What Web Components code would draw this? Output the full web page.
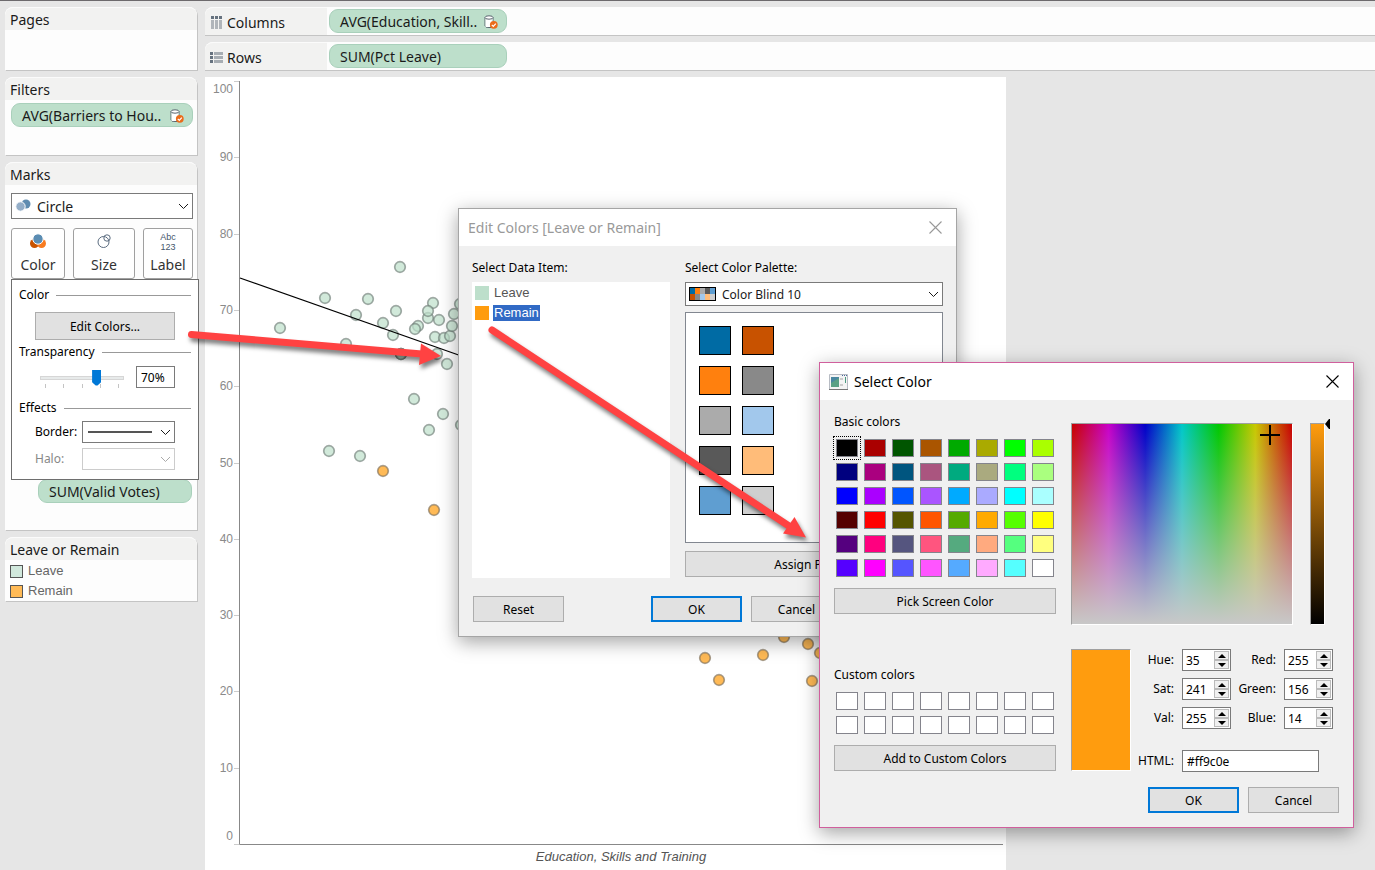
<!DOCTYPE html>
<html lang="en">
<head>
<meta charset="utf-8">
<title>Leave or Remain</title>
<style>
  html, body { margin: 0; height: 100%; }
  body { font: 14px/20px "Noto Sans", "Open Sans", sans-serif; color: #1a1a1a; background: #e6e6e6; overflow: hidden; }
</style>
</head>
<body>
<viz-workbook></viz-workbook>

<script>
const BASE = '*,*::before,*::after{box-sizing:border-box}button,input,select{font:inherit;color:inherit;margin:0}';

function define(name, css, html, setup) {
  const tpl = document.createElement('template');
  tpl.innerHTML = `<style>${BASE}${css}</style>${html}`;
  customElements.define(name, class extends HTMLElement {
    constructor() {
      super();
      this.attachShadow({ mode: 'open' }).append(tpl.content.cloneNode(true));
    }
    connectedCallback() {
      if (setup && !this.ready) { this.ready = true; setup(this, this.shadowRoot); }
    }
  });
}

const CHEVRON = '<svg class="chev" width="11" height="7" viewBox="0 0 11 7"><path d="M1 1l4.500 4.500L10 1" fill="none" stroke="currentColor"/></svg>';

/* ---------- shelf pieces ---------- */

define('viz-card', `
  :host{display:flex;flex-direction:column;background:#fdfdfd;border-radius:8px 8px 0 0;box-shadow:1px 1px 0 #c4c4c4;position:relative}
  h2{margin:0;height:23px;padding:2px 5px;font-size:14px;font-weight:400;line-height:20px;background:#f2f2f1;border-top:1px solid #fbfbfb;border-radius:8px 8px 0 0}
`, '<h2></h2><slot></slot>', (el, r) => { r.querySelector('h2').textContent = el.getAttribute('heading'); });

define('viz-pill', `
  :host{display:flex;align-items:center;gap:5px;height:24px;padding:1px 8px 0 10px;border:1px solid #a9d0bb;border-radius:9px;background:#bddfcb;line-height:22px;white-space:nowrap}
  span{flex:1}
  svg{display:none}
  :host([source]) svg{display:block}
`, `<span><slot></slot></span>
  <svg width="14" height="14" viewBox="0 0 14 14"><path d="M1 2.500v8.500q0 1.500 4 1.500h2M9 2.500V6" fill="none" stroke="#5b6670"/><path d="M1.500 3.500h7V6L6 9v3H1.500z" fill="#fff"/><ellipse cx="5" cy="2.500" rx="4" ry="1.700" fill="#fff" stroke="#5b6670"/><circle cx="9.800" cy="9.800" r="3.900" fill="#eb6b1a"/><path d="M7.800 9.800l1.500 1.500 2.500-2.700" fill="none" stroke="#fff" stroke-width="1.200"/></svg>`);

define('viz-shelf', `
  :host{display:grid;grid-template-columns:122px 1fr;height:28px;background:#fdfdfd;border-radius:8px 0 0 0;box-shadow:0 1px 0 #c4c4c4}
  .name{display:flex;align-items:center;gap:4px;padding:2px 0 0 5px;background:#f2f2f1;border-radius:8px 0 0 0;border-top:1px solid #fbfbfb}
  .drop{display:grid;grid-template-columns:178px;align-content:center;padding-left:2px}
`, '<div class="name"><slot name="icon"></slot><span></span></div><div class="drop"><slot></slot></div>',
(el, r) => { r.querySelector('.name span').textContent = el.getAttribute('name'); });

define('viz-mark-button', `
  :host{display:block}
  button{display:grid;justify-items:center;align-content:space-between;width:100%;height:51px;padding:4px 0 3px;border:1px solid #a0a0a0;border-radius:3px;background:#fff;color:#333;line-height:20px}
`, '<button type="button"><slot name="icon"></slot><slot></slot></button>');

/* ---------- form controls ---------- */

define('ui-button', `
  :host{display:block}
  button{display:block;width:100%;height:26px;padding:1px 0 0;border:1px solid #adadad;background:#e1e1e1;color:#000;font-size:12px;line-height:23px}
  :host([tall]) button{height:28px;line-height:26px}
  :host([primary]) button{border:2px solid #0078d7;line-height:21px}
`, '<button type="button"><slot></slot></button>');

define('ui-select', `
  :host{display:grid;align-items:center;color:#1a1a1a}
  :host([disabled]){color:#aaa}
  label{font-size:12px;color:#000}
  :host([disabled]) label{color:#888}
  :host([inline]){grid-template-columns:47px 1fr}
  .box{position:relative;display:grid}
  select{appearance:none;width:100%;height:var(--h,22px);padding:1px 20px 0 var(--indent,4px);border:1px solid #7a7a7a;border-radius:0;background:#fff;opacity:1}
  :host([disabled]) select{border-color:#ccc}
  ::slotted(svg){position:absolute;left:4px;top:0;bottom:0;margin:auto 0}
  .chev{position:absolute;right:4px;top:0;bottom:0;margin:auto 0;pointer-events:none}
`, `<label for="s"></label><div class="box"><select id="s"><option></option></select><slot></slot>${CHEVRON}</div>`,
(el, r) => {
  const label = r.querySelector('label');
  if (el.hasAttribute('label')) label.textContent = el.getAttribute('label'); else label.remove();
  const s = r.querySelector('select');
  s.options[0].textContent = el.getAttribute('value') || '';
  s.disabled = el.hasAttribute('disabled');
  if (el.hasAttribute('small')) s.style.fontSize = '12px';
});

define('ui-group', `
  :host{display:grid;gap:0}
  h3{display:flex;align-items:center;gap:7px;margin:0;font-size:12px;font-weight:400;line-height:16px;color:#000}
  h3::after{content:"";flex:1;height:1px;background:#999}
`, '<h3></h3><slot></slot>', (el, r) => { r.querySelector('h3').textContent = el.getAttribute('heading'); });

define('ui-opacity', `
  :host{display:grid;grid-template-columns:84px 39px;column-gap:12px;align-items:center}
  .slide{display:grid}
  input[type=range]{appearance:none;width:84px;height:18px;margin-top:2px;background:none}
  input[type=range]::-webkit-slider-runnable-track{height:4px;background:#e7eaea;border:1px solid #d6d6d6}
  input[type=range]::-webkit-slider-thumb{appearance:none;width:9px;height:16px;margin-top:-7px;background:#0078d7;clip-path:polygon(0 0,100% 0,100% 80%,60% 100%,40% 100%,0 80%)}
  .ticks{display:flex;justify-content:space-between;padding:0 5px;margin-top:-3px}
  .ticks i{width:1px;height:4px;background:#c4c4c4}
  input[type=text]{width:39px;height:22px;padding:1px 4px 0;border:1px solid #7a7a7a;background:#fff;font-size:12px;color:#000}
`, `<div class="slide"><input type="range" min="0" max="100" value="70" aria-label="Transparency"><div class="ticks"><i></i><i></i><i></i><i></i><i></i></div></div>
  <input type="text" value="70%" aria-label="Transparency value">`,
(el, r) => {
  const [range, text] = r.querySelectorAll('input');
  range.addEventListener('input', () => { text.value = range.value + '%'; });
});

define('ui-spin', `
  :host{display:grid;grid-template-columns:1fr 49px;column-gap:8px;align-items:center}
  label{text-align:right;font-size:12px;line-height:16px}
  .box{display:grid;grid-template-columns:1fr 15px;height:22px;padding:1px;border:1px solid #7a7a7a;background:#fff}
  input{appearance:textfield;min-width:0;padding:1px 0 0 2px;border:0;background:none;font-size:12px}
  input::-webkit-inner-spin-button{appearance:none;display:none}
  .steps{display:grid;grid-template-rows:9px 9px}
  button{display:grid;place-items:center;padding:0;border:1px solid #bbb;background:#f0f0f0}
`, `<label for="n"></label><div class="box"><input id="n" type="number"><div class="steps">
  <button type="button" aria-label="Up"><svg width="8" height="4"><path d="M0 4L4 0l4 4z"/></svg></button>
  <button type="button" aria-label="Down"><svg width="8" height="4"><path d="M0 0l4 4 4-4z"/></svg></button></div></div>`,
(el, r) => {
  const n = r.querySelector('input'), [up, down] = r.querySelectorAll('button');
  r.querySelector('label').textContent = el.getAttribute('label');
  n.value = el.getAttribute('value');
  up.onclick = () => n.stepUp();
  down.onclick = () => n.stepDown();
});

define('ui-text', `
  :host{display:grid;grid-template-columns:41px 137px;column-gap:8px;align-items:center}
  label{text-align:right;font-size:12px;line-height:16px}
  input{width:100%;height:22px;padding:0 4px;border:1px solid #7a7a7a;background:#fff;font-size:12px}
`, '<label for="t"></label><input id="t" type="text">', (el, r) => {
  r.querySelector('label').textContent = el.getAttribute('label');
  r.querySelector('input').value = el.getAttribute('value');
});

define('ui-swatches', `
  :host{display:grid;justify-content:start;grid-template-columns:repeat(var(--cols,8),var(--w,22px));grid-auto-rows:var(--rh,18px);gap:var(--gy,6px) var(--gx,6px)}
  button{padding:0;border:1px solid var(--edge,#84848c)}
  button.on{outline:1px dotted #000;outline-offset:2px}
`, '', (el, r) => {
  el.getAttribute('colors').split(' ').forEach((c, i) => {
    const b = document.createElement('button');
    b.type = 'button';
    b.style.background = '#' + c;
    b.setAttribute('aria-label', '#' + c);
    if (!i && el.hasAttribute('selected')) b.className = 'on';
    r.append(b);
  });
});

/* ---------- windows ---------- */

define('ui-dialog', `
  :host{display:flex;flex-direction:column;position:absolute;border:1px solid var(--frame,#a5a5a5);background:#f0f0f0;color:#000;box-shadow:0 5px 18px rgba(0,0,0,.36);font-size:12px;line-height:16px}
  header{display:flex;align-items:center;height:37px;padding:0 14px 0 9px;background:#fff;color:var(--title,#000);font-size:14px;line-height:20px}
  h2{flex:1;margin:0;font-size:14px;font-weight:400}
  ::slotted([slot=icon]){margin-right:6px}
  header button{display:grid;padding:0;border:0;background:none}
`, `<header><slot name="icon"></slot><h2></h2><button type="button" aria-label="Close"><svg width="13" height="13" viewBox="0 0 13 13"><path d="M.5.5l12 12M12.500.5l-12 12" stroke="currentColor" stroke-width="1.100"/></svg></button></header><slot></slot>`,
(el, r) => {
  r.querySelector('h2').textContent = el.getAttribute('heading');
  r.querySelector('button').onclick = () => el.remove();
});

define('edit-colors', `
  :host{display:grid;grid-template-columns:198px 258px;column-gap:15px;padding:14px 13px}
  .col{display:grid;align-content:start}
  .cap{line-height:16px;margin-bottom:6px}
  ul{list-style:none;margin:0;padding:1px 3px;height:296px;background:#fff;font:13px/16px "Liberation Sans",Arial,sans-serif;color:#555}
  li{display:flex;align-items:center;gap:4px;height:20px}
  li i{width:14px;height:14px}
  li span{padding:0 1px}
  li.on span{background:#316ac5;color:#fff}
  ui-select{--h:24px;--indent:36px}
  .pal{height:231px;margin:6px 0 8px;padding:13px;border:1px solid #828790;background:#fff}
  .pal ui-swatches{--cols:2;--w:32px;--rh:29px;--gy:11px;--gx:11px;--edge:#000}
  .foot{grid-column:1/-1;display:grid;grid-template-columns:91px 69px 91px 91px;column-gap:9px;padding:18px 0 0 1px}
`, `
  <div class="col"><div class="cap">Select Data Item:</div>
    <ul><li><i style="background:#bddfcb"></i><span>Leave</span></li><li class="on"><i style="background:#ff9c0e"></i><span>Remain</span></li></ul></div>
  <div class="col"><div class="cap">Select Color Palette:</div>
    <ui-select small value="Color Blind 10"><svg width="27" height="14"><g shape-rendering="crispEdges"></g><rect x=".5" y=".5" width="26" height="13" fill="none" stroke="#000"/></svg></ui-select>
    <div class="pal"><ui-swatches colors="006ba4 c85200 ff800e 898989 ababab a2c8ec 595959 ffbc79 5f9ed1 cfcfcf"></ui-swatches></div>
    <ui-button>Assign Palette</ui-button></div>
  <div class="foot"><ui-button>Reset</ui-button><span></span><ui-button primary>OK</ui-button><ui-button>Cancel</ui-button></div>
`, (el, r) => {
  const cs = ['006ba4', 'ff800e', 'ababab', '595959', '5f9ed1', 'c85200', '898989', 'a2c8ec', 'ffbc79', 'cfcfcf'];
  r.querySelector('g').innerHTML = cs.map((c, i) =>
    `<rect x="${1 + (i % 5) * 5}" y="${i < 5 ? 1 : 7}" width="5" height="6" fill="#${c}"/>`).join('');
});

define('color-field', `
  :host{display:grid;grid-template-columns:222px 17px 15px 8px;height:202px}
  .hue{position:relative;width:222px;border:1px solid #a0a0a0;border-right-color:#fff;border-bottom-color:#fff;background:linear-gradient(rgba(200,200,200,0),#c8c8c8),linear-gradient(90deg,#c80000,#c800c8,#0000c8,#00c8c8,#00c800,#c8c800,#c80000)}
  .hue svg{position:absolute;left:188px;top:1px}
  .val{border:1px solid #a0a0a0;border-right-color:#fff;border-bottom-color:#fff;background:linear-gradient(#ff9c0e,#000)}
  .at{margin-top:-4px}
`, `<div class="hue"><svg width="20" height="20"><path d="M0 10h20M10 0v20" stroke="#000" stroke-width="2"/></svg></div><span></span><div class="val"></div><svg class="at" width="6" height="10"><path d="M0 5l4-5h1v10H4z"/></svg>`);

define('select-color', `
  :host{display:grid;grid-template-columns:222px 268px;column-gap:15px;padding:14px 14px}
  .cap{line-height:16px}
  .left{display:grid;align-content:start}
  .left ui-swatches{margin:9px 2px 11px}
  .left .second{margin-top:53px}
  .right{display:grid;align-content:start;padding-top:9px;row-gap:24px}
  .values{display:grid;grid-template-columns:60px 100px 102px;grid-template-rows:87px 36px}
  .now{grid-row:1/3;width:60px;height:122px;border:1px solid #a0a0a0;border-right-color:#fff;border-bottom-color:#fff;background:#ff9c0e}
  .spins{display:grid;align-content:start;row-gap:7px}
  .html{grid-column:2/-1;margin-top:14px;padding-left:2px}
  .buttons{display:grid;grid-template-columns:91px 91px;gap:9px;padding-left:77px;margin-top:-9px}
`, `
  <div class="left"><div class="cap">Basic colors</div>
    <ui-swatches selected colors="000000 aa0000 005500 aa5500 00aa00 aaaa00 00ff00 aaff00 00007f aa007f 00557f aa557f 00aa7f aaaa7f 00ff7f aaff7f 0000ff aa00ff 0055ff aa55ff 00aaff aaaaff 00ffff aaffff 550000 ff0000 555500 ff5500 55aa00 ffaa00 55ff00 ffff00 55007f ff007f 55557f ff557f 55aa7f ffaa7f 55ff7f ffff7f 5500ff ff00ff 5555ff ff55ff 55aaff ffaaff 55ffff ffffff"></ui-swatches>
    <ui-button>Pick Screen Color</ui-button>
    <div class="cap second">Custom colors</div>
    <ui-swatches colors="fff fff fff fff fff fff fff fff fff fff fff fff fff fff fff fff"></ui-swatches>
    <ui-button>Add to Custom Colors</ui-button></div>
  <div class="right"><color-field></color-field>
    <div class="values"><div class="now"></div>
      <div class="spins"><ui-spin label="Hue:" value="35"></ui-spin><ui-spin label="Sat:" value="241"></ui-spin><ui-spin label="Val:" value="255"></ui-spin></div>
      <div class="spins"><ui-spin label="Red:" value="255"></ui-spin><ui-spin label="Green:" value="156"></ui-spin><ui-spin label="Blue:" value="14"></ui-spin></div>
      <ui-text class="html" label="HTML:" value="#ff9c0e"></ui-text></div>
    <div class="buttons"><ui-button primary>OK</ui-button><ui-button>Cancel</ui-button></div></div>
`);

/* ---------- marks card and its pop-up ---------- */

define('color-popup', `
  :host{display:grid;align-content:start;height:201px;padding:7px 7px 0;border:1px solid #6e6e6e;background:#fff}
  .edit{margin:9px 16px 4px}
  ui-opacity{margin:6px 0 12px 21px}
  ui-select{margin:5px 16px 0}
`, `
  <ui-group heading="Color"><ui-button tall class="edit">Edit Colors...</ui-button></ui-group>
  <ui-group heading="Transparency"><ui-opacity></ui-opacity></ui-group>
  <ui-group heading="Effects">
    <ui-select inline label="Border:"><svg width="66" height="2" style="pointer-events:none"><path d="M2 1h64" stroke="#555" stroke-width="2"/></svg></ui-select>
    <ui-select inline disabled label="Halo:"></ui-select></ui-group>
`);

define('marks-panel', `
  :host{display:block;position:relative;padding:8px 4px 0 6px;height:345px}
  ui-select{--h:26px;--indent:25px}
  .row{display:grid;grid-template-columns:54px 62px 50px;column-gap:8px;margin-top:9px}
  color-popup{position:absolute;left:6px;top:94px;width:188px;z-index:2}
  viz-pill{margin:200px 1px 0 27px}
`, `
  <ui-select value="Circle"><svg width="18" height="14" viewBox="0 0 18 14"><circle cx="11" cy="5" r="4.500" fill="#5f8cb0"/><circle cx="5.500" cy="7.500" r="4.700" fill="#94aec8" stroke="#fff"/></svg></ui-select>
  <div class="row">
    <viz-mark-button><svg slot="icon" width="18" height="17" viewBox="0 0 18 17"><circle cx="5.500" cy="10.500" r="4.500" fill="#c85200"/><circle cx="12.500" cy="10.500" r="4.500" fill="#f77b20"/><circle cx="9" cy="6" r="5.200" fill="#5b8db3" stroke="#fff"/></svg>Color</viz-mark-button>
    <viz-mark-button><svg slot="icon" width="18" height="17" viewBox="0 0 18 17" fill="none" stroke="#5b6c80"><circle cx="8.500" cy="9" r="5.500"/><circle cx="12" cy="5" r="3.200"/></svg>Size</viz-mark-button>
    <viz-mark-button><svg slot="icon" width="20" height="20" viewBox="0 0 20 20" style="overflow:visible"><g font-family="Liberation Sans, sans-serif" font-size="9" fill="#44566c" text-anchor="middle"><text x="10" y="7">Abc</text><text x="10" y="17">123</text></g></svg>Label</viz-mark-button>
  </div>
  <viz-pill>SUM(Valid Votes)</viz-pill>
  <color-popup></color-popup>
`);

define('viz-legend', `
  :host{display:block;padding:1px 5px;height:41px;font:13px/20px "Liberation Sans",Arial,sans-serif;color:#666}
  ul{list-style:none;margin:0;padding:0}
  li{display:flex;align-items:center;gap:5px;height:20px}
  i{width:13px;height:13px;border:1px solid #555}
`, '<ul><li><i style="background:#d1e8dc"></i>Leave</li><li><i style="background:#ffba56"></i>Remain</li></ul>');

/* ---------- scatter plot ---------- */

define('scatter-plot', `
  :host{display:block;background:#fff}
  svg{display:block;width:100%;height:100%}
  text{font-family:"Liberation Sans",Arial,sans-serif}
`, '<svg></svg>', (el, r) => {
  const ORIGIN = [205, 77], STEP = 76.3, BASEY = 844;
  const leave = [[400,267],[325,298],[368,299],[356,315],[396,311],[383,323],[393,335],[280,328],[346,344],[401,354],[401,354],[401,354],[433,303],[428,318],[428,311],[439,320],[418,326],[415,329],[435,337],[444,338],[450,336],[452,326],[454,314],[460,304],[437,354],[447,364],[414,399],[443,414],[429,430],[461,425],[329,451],[360,456]];
  const remain = [[383,471],[434,510],[705,658],[719,680],[763,655],[784,637],[808,644],[812,681],[820,653]];
  let s = `<g transform="translate(${-ORIGIN[0]},${-ORIGIN[1]})">`;
  for (let v = 0; v <= 10; v++) {
    const y = Math.round(BASEY - v * STEP);
    const ty = v === 0 ? y - 4 : v === 10 ? y + 12 : y + 4;
    s += `<path d="M234 ${y + .5}h5" stroke="#ccc"/><text x="233" y="${ty}" text-anchor="end" font-size="12" fill="#8a8a8a">${v * 10}</text>`;
  }
  s += '<path d="M239.500 81v763.500H1003" fill="none" stroke="#888"/>';
  s += '<text x="621" y="861" text-anchor="middle" font-size="13" font-style="italic" fill="#555">Education, Skills and Training</text>';
  const dot = (fill, edge) => ([x, y]) => `<circle cx="${x}" cy="${y}" r="5.300" fill="${fill}" stroke="${edge}" stroke-width="1.700"/>`;
  s += leave.map(dot('rgba(189,223,203,.7)', 'rgba(110,125,118,.65)')).join('');
  s += remain.map(dot('rgba(255,156,14,.7)', 'rgba(125,110,90,.65)')).join('');
  s += '<path d="M240 278l220 77.500" stroke="#000" stroke-width="1.300"/></g>';
  r.querySelector('svg').innerHTML = s;
});

define('red-arrows', `
  :host{display:block;position:absolute;inset:0;pointer-events:none;z-index:5}
  svg{width:100%;height:100%;filter:drop-shadow(2px 4px 2px rgba(0,0,0,.5))}
`, `<svg stroke-linecap="round" stroke="#ff4242" fill="#ff4242"><path d="M191.500 334.500L422 354" stroke-width="7"/><path d="M421 343.500L441 356 419 365z" stroke="none"/>
  <path d="M492 330L789 526" stroke-width="7"/><path d="M794.500 517L806 537.500 783 533.500z" stroke="none"/></svg>`);

/* ---------- whole window ---------- */

define('viz-workbook', `
  :host{display:block;position:relative;min-height:100vh;overflow:hidden}
  .app{display:grid;grid-template-columns:192px minmax(0,1fr);column-gap:8px;min-height:100vh;padding:6px 0 0 5px;border-top:1px solid #6d6a6d}
  aside{display:grid;align-content:start;row-gap:7px}
  main{display:flex;flex-direction:column;gap:7px}
  .sheet{flex:1;display:grid;grid-template-columns:801fr 369fr}
  .pages{height:63px}
  .filters{height:78px}
  .filters viz-pill{margin:3px 4px 0 6px}
  .edit{left:458px;top:208px;width:499px;height:429px;--title:#999}
  .pick{left:819px;top:362px;width:535px;height:466px;--frame:#d05f9d;--title:#000}
`, `
  <div class="app">
    <aside>
      <viz-card class="pages" heading="Pages"></viz-card>
      <viz-card class="filters" heading="Filters"><viz-pill source>AVG(Barriers to Hou..</viz-pill></viz-card>
      <viz-card heading="Marks"><marks-panel></marks-panel></viz-card>
      <viz-card heading="Leave or Remain"><viz-legend></viz-legend></viz-card>
    </aside>
    <main>
      <viz-shelf name="Columns"><svg slot="icon" width="13" height="14"><path d="M1 0h3v3H1zM5 0h3v3H5zM9 0h3v3H9z" fill="#66727f"/><path d="M1 4h3v9H1zM5 4h3v9H5zM9 4h3v9H9z" fill="#b0b5ba"/></svg><viz-pill source>AVG(Education, Skill..</viz-pill></viz-shelf>
      <viz-shelf name="Rows"><svg slot="icon" width="13" height="14"><path d="M0 1h3v3H0zM0 5h3v3H0zM0 9h3v3H0z" fill="#66727f"/><path d="M4 1h9v3H4zM4 5h9v3H4zM4 9h9v3H4z" fill="#a7adb3"/></svg><viz-pill>SUM(Pct Leave)</viz-pill></viz-shelf>
      <div class="sheet"><scatter-plot></scatter-plot></div>
    </main>
  </div>
  <ui-dialog class="edit" heading="Edit Colors [Leave or Remain]"><edit-colors></edit-colors></ui-dialog>
  <ui-dialog class="pick" heading="Select Color">
    <svg slot="icon" width="19" height="16" viewBox="0 0 19 16"><path d="M.5.5h18v15H.5z" fill="#f4f4f4" stroke="#b8bcc4"/><path d="M0 15.500h19" stroke="#777"/><path d="M13 1.500h5" stroke="#4a6a9a" stroke-dasharray="1 1"/><path d="M2 3h8v10H2z" fill="#4a87a0"/><path d="M2 9l8-5v9H2z" fill="#5aa184"/><path d="M11 4h3v2h-3zM11 10h3v2h-3z" fill="#ccc"/><path d="M16 3h1v6h-1z" fill="#4c9a80"/></svg>
    <select-color></select-color></ui-dialog>
  <red-arrows></red-arrows>
`);
</script>
</body>
</html>
